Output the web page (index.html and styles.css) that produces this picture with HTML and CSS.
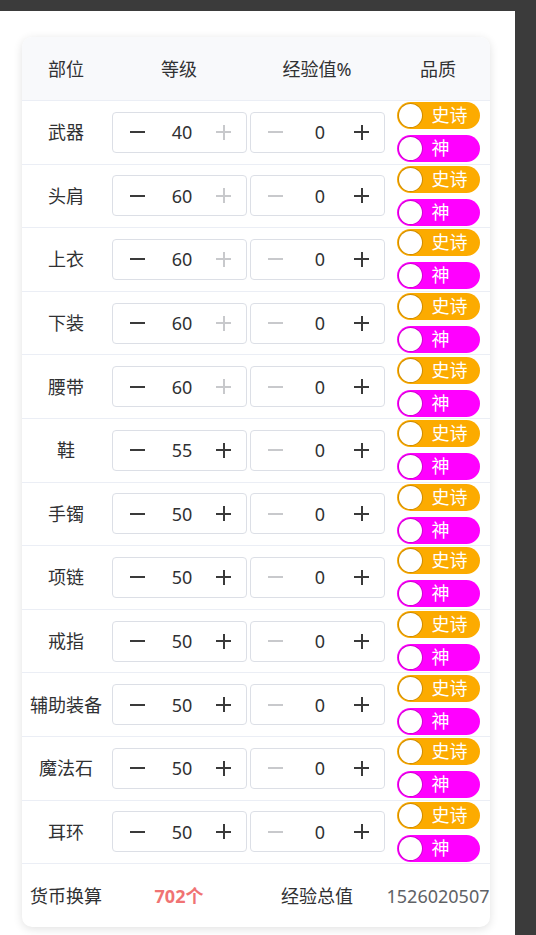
FILE: index.html
```html
<!DOCTYPE html>
<html>
    <head>
        <meta charset="utf-8">
        <link rel="stylesheet" href="styles.css">
    </head>
    <body>
        <div class="page">
            <div class="card">
                <div class="row head">
                    <div class="cell">部位</div>
                    <div class="cell">等级</div>
                    <div class="cell">经验值%</div>
                    <div class="cell">品质</div>
                </div>

                <div class="row">
                    <div class="cell">武器</div>
                    <div class="cell"><div class="stepper"><span class="btn minus"></span><span class="num">40</span><span class="btn plus off"></span></div></div>
                    <div class="cell"><div class="stepper"><span class="btn minus off"></span><span class="num">0</span><span class="btn plus"></span></div></div>
                    <div class="cell quality"><div class="switch epic"><span class="knob"></span><span class="label">史诗</span></div><div class="switch god"><span class="knob"></span><span class="label">神</span></div></div>
                </div>
                <div class="row">
                    <div class="cell">头肩</div>
                    <div class="cell"><div class="stepper"><span class="btn minus"></span><span class="num">60</span><span class="btn plus off"></span></div></div>
                    <div class="cell"><div class="stepper"><span class="btn minus off"></span><span class="num">0</span><span class="btn plus"></span></div></div>
                    <div class="cell quality"><div class="switch epic"><span class="knob"></span><span class="label">史诗</span></div><div class="switch god"><span class="knob"></span><span class="label">神</span></div></div>
                </div>
                <div class="row">
                    <div class="cell">上衣</div>
                    <div class="cell"><div class="stepper"><span class="btn minus"></span><span class="num">60</span><span class="btn plus off"></span></div></div>
                    <div class="cell"><div class="stepper"><span class="btn minus off"></span><span class="num">0</span><span class="btn plus"></span></div></div>
                    <div class="cell quality"><div class="switch epic"><span class="knob"></span><span class="label">史诗</span></div><div class="switch god"><span class="knob"></span><span class="label">神</span></div></div>
                </div>
                <div class="row">
                    <div class="cell">下装</div>
                    <div class="cell"><div class="stepper"><span class="btn minus"></span><span class="num">60</span><span class="btn plus off"></span></div></div>
                    <div class="cell"><div class="stepper"><span class="btn minus off"></span><span class="num">0</span><span class="btn plus"></span></div></div>
                    <div class="cell quality"><div class="switch epic"><span class="knob"></span><span class="label">史诗</span></div><div class="switch god"><span class="knob"></span><span class="label">神</span></div></div>
                </div>
                <div class="row">
                    <div class="cell">腰带</div>
                    <div class="cell"><div class="stepper"><span class="btn minus"></span><span class="num">60</span><span class="btn plus off"></span></div></div>
                    <div class="cell"><div class="stepper"><span class="btn minus off"></span><span class="num">0</span><span class="btn plus"></span></div></div>
                    <div class="cell quality"><div class="switch epic"><span class="knob"></span><span class="label">史诗</span></div><div class="switch god"><span class="knob"></span><span class="label">神</span></div></div>
                </div>
                <div class="row">
                    <div class="cell">鞋</div>
                    <div class="cell"><div class="stepper"><span class="btn minus"></span><span class="num">55</span><span class="btn plus"></span></div></div>
                    <div class="cell"><div class="stepper"><span class="btn minus off"></span><span class="num">0</span><span class="btn plus"></span></div></div>
                    <div class="cell quality"><div class="switch epic"><span class="knob"></span><span class="label">史诗</span></div><div class="switch god"><span class="knob"></span><span class="label">神</span></div></div>
                </div>
                <div class="row">
                    <div class="cell">手镯</div>
                    <div class="cell"><div class="stepper"><span class="btn minus"></span><span class="num">50</span><span class="btn plus"></span></div></div>
                    <div class="cell"><div class="stepper"><span class="btn minus off"></span><span class="num">0</span><span class="btn plus"></span></div></div>
                    <div class="cell quality"><div class="switch epic"><span class="knob"></span><span class="label">史诗</span></div><div class="switch god"><span class="knob"></span><span class="label">神</span></div></div>
                </div>
                <div class="row">
                    <div class="cell">项链</div>
                    <div class="cell"><div class="stepper"><span class="btn minus"></span><span class="num">50</span><span class="btn plus"></span></div></div>
                    <div class="cell"><div class="stepper"><span class="btn minus off"></span><span class="num">0</span><span class="btn plus"></span></div></div>
                    <div class="cell quality"><div class="switch epic"><span class="knob"></span><span class="label">史诗</span></div><div class="switch god"><span class="knob"></span><span class="label">神</span></div></div>
                </div>
                <div class="row">
                    <div class="cell">戒指</div>
                    <div class="cell"><div class="stepper"><span class="btn minus"></span><span class="num">50</span><span class="btn plus"></span></div></div>
                    <div class="cell"><div class="stepper"><span class="btn minus off"></span><span class="num">0</span><span class="btn plus"></span></div></div>
                    <div class="cell quality"><div class="switch epic"><span class="knob"></span><span class="label">史诗</span></div><div class="switch god"><span class="knob"></span><span class="label">神</span></div></div>
                </div>
                <div class="row">
                    <div class="cell">辅助装备</div>
                    <div class="cell"><div class="stepper"><span class="btn minus"></span><span class="num">50</span><span class="btn plus"></span></div></div>
                    <div class="cell"><div class="stepper"><span class="btn minus off"></span><span class="num">0</span><span class="btn plus"></span></div></div>
                    <div class="cell quality"><div class="switch epic"><span class="knob"></span><span class="label">史诗</span></div><div class="switch god"><span class="knob"></span><span class="label">神</span></div></div>
                </div>
                <div class="row">
                    <div class="cell">魔法石</div>
                    <div class="cell"><div class="stepper"><span class="btn minus"></span><span class="num">50</span><span class="btn plus"></span></div></div>
                    <div class="cell"><div class="stepper"><span class="btn minus off"></span><span class="num">0</span><span class="btn plus"></span></div></div>
                    <div class="cell quality"><div class="switch epic"><span class="knob"></span><span class="label">史诗</span></div><div class="switch god"><span class="knob"></span><span class="label">神</span></div></div>
                </div>
                <div class="row">
                    <div class="cell">耳环</div>
                    <div class="cell"><div class="stepper"><span class="btn minus"></span><span class="num">50</span><span class="btn plus"></span></div></div>
                    <div class="cell"><div class="stepper"><span class="btn minus off"></span><span class="num">0</span><span class="btn plus"></span></div></div>
                    <div class="cell quality"><div class="switch epic"><span class="knob"></span><span class="label">史诗</span></div><div class="switch god"><span class="knob"></span><span class="label">神</span></div></div>
                </div>

                <div class="row foot">
                    <div class="cell">货币换算</div>
                    <div class="cell money">702个</div>
                    <div class="cell">经验总值</div>
                    <div class="cell total">1526020507</div>
                </div>
            </div>
        </div>
    </body>
</html>
```

FILE: styles.css
```css
* {
    box-sizing: border-box;
    font-family: "Noto Sans", "Noto Sans CJK SC", sans-serif;
}

body {
    margin: 0;
    background: #3b3b3b;
}

.page {
    margin-top: 11px;
    width: 515px;
    height: 924px;
    background: #fff;
    padding: 26px 0 0 22px;
}

.card {
    width: 468px;
    border-radius: 10px;
    overflow: hidden;
    background: #fff;
    box-shadow: 0 2px 10px rgba(0, 0, 0, 0.12);
}

.row {
    display: grid;
    grid-template-columns: 88px 138px 138px 104px;
    height: 63.6px;
    border-bottom: 1px solid #ebeef5;
}

.row.head {
    height: 64px;
    background: #f8f9fb;
}

.row.foot {
    height: 63px;
    border-bottom: none;
}

.cell {
    display: flex;
    align-items: center;
    justify-content: center;
    font-size: 18px;
    line-height: 24px;
    color: #303133;
    white-space: nowrap;
}

.money {
    color: #f07373;
    font-weight: bold;
}

.total {
    color: #606266;
}

.stepper {
    display: flex;
    align-items: center;
    width: 135px;
    height: 41px;
    border: 1px solid #dcdfe6;
    border-radius: 4px;
}

.num {
    flex: 1;
    text-align: center;
    font-size: 18px;
    color: #303133;
}

.btn {
    position: relative;
    height: 100%;
    color: #3a3a3a;
}

.btn.minus {
    width: 50px;
}

.btn.plus {
    width: 44px;
}

.btn.off {
    color: #c8c9cc;
}

.btn::before,
.plus::after {
    content: "";
    position: absolute;
    left: 50%;
    top: 50%;
    background: currentColor;
}

.btn::before {
    width: 15px;
    height: 2px;
    margin: -1px 0 0 -7.5px;
}

.plus::after {
    width: 2px;
    height: 15px;
    margin: -7.5px 0 0 -1px;
}

.quality {
    flex-direction: column;
    gap: 6px;
}

.switch {
    position: relative;
    width: 83px;
    height: 27px;
    border-radius: 14px;
    display: flex;
    align-items: center;
}

.switch.epic {
    background: #fcab00;
}

.switch.god {
    background: #ff00ff;
}

.knob {
    position: absolute;
    left: 1px;
    top: 1px;
    width: 25px;
    height: 25px;
    border-radius: 50%;
    background: #fff;
    background-clip: padding-box;
    border: 1.5px solid rgba(0, 0, 0, 0.18);
}

.label {
    margin-left: 35px;
    font-size: 18px;
    line-height: 27px;
    color: #fff;
}
```
